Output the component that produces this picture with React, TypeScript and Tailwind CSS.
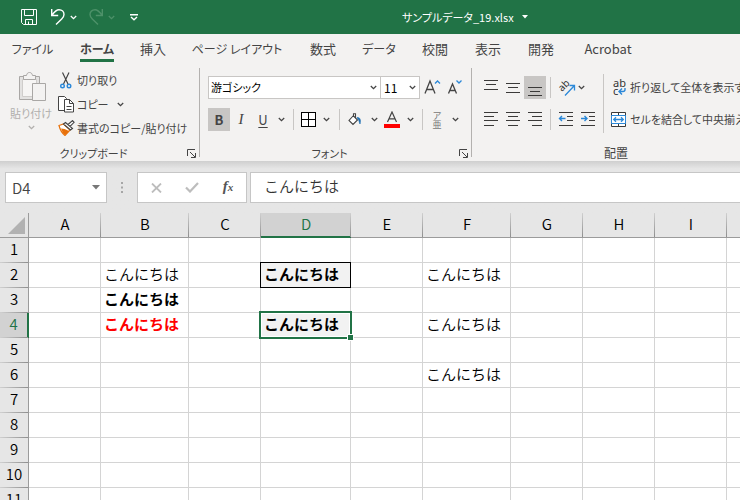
import { useState } from "react";
import type { ReactNode } from "react";
import clsx from "clsx";

const tabs = [
  { name: "ファイル", width: "w-[65px]", text: "text-xs" },
  { name: "ホーム", width: "w-[64px]", text: "text-xs" },
  { name: "挿入", width: "w-[48px]", text: "text-[13px]" },
  { name: "ページ レイアウト", width: "w-[120px]", text: "text-xs" },
  { name: "数式", width: "w-[52px]", text: "text-[13px]" },
  { name: "データ", width: "w-[60px]", text: "text-xs" },
  { name: "校閲", width: "w-[52px]", text: "text-[13px]" },
  { name: "表示", width: "w-[54px]", text: "text-[13px]" },
  { name: "開発", width: "w-[52px]", text: "text-[13px]" },
  { name: "Acrobat", width: "w-[82px]", text: "text-[13px]" },
];

const columns = [
  { name: "A", width: "w-[72px]" },
  { name: "B", width: "w-[88px]" },
  { name: "C", width: "w-[72px]" },
  { name: "D", width: "w-[90px]" },
  { name: "E", width: "w-[72px]" },
  { name: "F", width: "w-[88px]" },
  { name: "G", width: "w-[72px]" },
  { name: "H", width: "w-[72px]" },
  { name: "I", width: "w-[72px]" },
  { name: "", width: "w-auto" },
];

const rows = [1, 2, 3, 4, 5, 6, 7, 8, 9, 10, 11];

interface Cell {
  text: string;
  bold?: boolean;
  red?: boolean;
  fill?: boolean;
  outline?: boolean;
}

const cells: Record<string, Cell> = {
  B2: { text: "こんにちは" },
  B3: { text: "こんにちは", bold: true },
  B4: { text: "こんにちは", bold: true, red: true },
  D2: { text: "こんにちは", bold: true, fill: true, outline: true },
  D4: { text: "こんにちは", bold: true, fill: true },
  F2: { text: "こんにちは" },
  F4: { text: "こんにちは" },
  F6: { text: "こんにちは" },
};

function Chevron() {
  return (
    <svg width="7" height="5" viewBox="0 0 7 5" fill="none" stroke="currentColor" strokeWidth="1.3">
      <path d="M.8 1 3.5 3.6 6.2 1" />
    </svg>
  );
}

function Lines({ rows }: { rows: [number, number, number][] }) {
  return (
    <svg width="16" height="16" viewBox="0 0 16 16" stroke="#3b3a39" shapeRendering="crispEdges">
      {rows.map(([y, x1, x2]) => (
        <path key={y} d={`M${x1} ${y + 0.5}H${x2}`} />
      ))}
    </svg>
  );
}

function Separator({ className }: { className?: string }) {
  return <span className={clsx("h-[21px] w-px shrink-0 bg-[#c8c6c4]", className)} />;
}

interface ToolProps {
  label: string;
  width?: string;
  active?: boolean;
  className?: string;
  children: ReactNode;
}

function Tool({ label, width = "w-[22px]", active, className, children }: ToolProps) {
  return (
    <button
      type="button"
      aria-label={label}
      aria-pressed={active}
      className={clsx("flex h-[23px] shrink-0 items-center justify-center", width, active && "bg-[#c8c6c4]", className)}
    >
      {children}
    </button>
  );
}

interface GroupProps {
  label: string;
  className: string;
  labelSize?: string;
  launcher?: boolean;
  children: ReactNode;
}

function Group({ label, className, labelSize = "text-[11px]", launcher = true, children }: GroupProps) {
  return (
    <section aria-label={label} className={clsx("flex shrink-0 flex-col", className)}>
      <div className="flex flex-1">{children}</div>
      <div className="flex h-4 items-center">
        <h2 className={clsx("flex-1 text-center leading-4", labelSize)}>{label}</h2>
        <button type="button" aria-label={`${label}の設定`} className="flex w-3 items-center">
          {launcher && (
            <svg width="9" height="9" viewBox="0 0 9 9" fill="none" stroke="#444">
              <path d="M.5 7V.5H8M3 3l5 5M8.5 4v4.5H4" />
            </svg>
          )}
        </button>
      </div>
    </section>
  );
}

function TitleBar() {
  return (
    <header className="grid h-[34px] shrink-0 grid-cols-[402px_1fr] items-center bg-[#217346] text-white">
      <div className="flex items-center pl-[21px]">
        <button type="button" aria-label="上書き保存">
          <svg width="16" height="16" viewBox="0 0 16 16" fill="none" stroke="currentColor">
            <path d="M.5.5h15v15H2.500l-2-2zM3.500.5v6h9v-6M4.500 15.500v-5h7v5M7.500 12.500v3" />
          </svg>
        </button>
        <button type="button" aria-label="元に戻す" className="ml-[13px]">
          <svg width="16" height="18" viewBox="0 0 16 18" fill="none" stroke="currentColor" strokeWidth="1.4">
            <path d="M1.700 1v6.500h6.500M1.900 7.200C4 4.500 6 1.800 9 1.800c3 0 5 2 5 4.600 0 2-1 3.200-2.300 4.500L6 16.500" />
          </svg>
        </button>
        <button type="button" aria-label="元に戻す履歴" className="ml-1">
          <Chevron />
        </button>
        <button type="button" aria-label="やり直し" disabled className="ml-[11px] text-[#4d9169]">
          <svg width="16" height="18" viewBox="0 0 16 18" fill="none" stroke="currentColor" strokeWidth="1.4">
            <path d="M14.300 1v6.500H7.800M14.100 7.200C12 4.500 10 1.800 7 1.800c-3 0-5 2-5 4.600 0 2 1 3.200 2.300 4.500L10 16.500" />
          </svg>
        </button>
        <button type="button" aria-label="やり直し履歴" disabled className="ml-1 text-[#4d9169]">
          <Chevron />
        </button>
        <button type="button" aria-label="クイック アクセス ツール バーのカスタマイズ" className="ml-[15px]">
          <svg width="8" height="7" viewBox="0 0 8 7" fill="none" stroke="currentColor" strokeWidth="1.4">
            <path d="M0 .7h8M1 3l3 2.700L7 3" />
          </svg>
        </button>
      </div>
      <button type="button" className="flex items-center gap-2 justify-self-start">
        <h1 className="text-[11px] leading-4">サンプルデータ_19.xlsx</h1>
        <svg width="6" height="4" viewBox="0 0 6 4" fill="currentColor">
          <path d="M0 0h6L3 3.500z" />
        </svg>
      </button>
    </header>
  );
}

function ClipboardGroup() {
  return (
    <Group label="クリップボード" className="w-[199px]">
      <button type="button" disabled className="ml-2 flex w-[46px] flex-col items-center pt-[5px] text-[#b1afad]">
        <svg width="28" height="32" viewBox="0 0 28 32" fill="none" stroke="#a9a7a5" className="ml-1">
          <path fill="#e3e2e1" d="M.5 5.500h20v23H.5z" />
          <path fill="#f6f5f4" d="M3.500 8.500h14v17h-14z" stroke="#cfcdcb" />
          <path fill="#f3f2f1" d="M4.500 8.500v-4h3c.4-2 1.300-3 3-3s2.600 1 3 3h3v4z" />
          <path fill="#f3f2f1" d="M13.500 12.500h13v17h-13z" />
        </svg>
        <span className="mt-[2px] leading-4 whitespace-nowrap">貼り付け</span>
        <span className="mt-1">
          <Chevron />
        </span>
      </button>
      <div className="flex flex-col pt-[2px] pl-1">
        <button type="button" className="flex h-6 items-center gap-[2px]">
          <svg width="17" height="17" viewBox="0 0 17 17" fill="none">
            <path d="M4.500.5l5.500 11.500M11 .5 5.500 12" stroke="#444" strokeWidth="1.200" />
            <circle cx="4.500" cy="14" r="1.800" stroke="#2b88d8" strokeWidth="1.400" />
            <circle cx="11" cy="14" r="1.800" stroke="#2b88d8" strokeWidth="1.400" />
          </svg>
          切り取り
        </button>
        <div className="flex h-6 items-center">
          <button type="button" className="flex items-center gap-[2px]">
            <svg width="17" height="17" viewBox="0 0 17 17" fill="#fff" stroke="#444">
              <path d="M.5.500h6l2 2v12h-8z" />
              <path d="M6.500 3.500h5l4 4v8.500h-9z" />
              <path d="M11.500 3.500v4h4M8.500 10.500h5M8.500 13.500h5" fill="none" />
            </svg>
            コピー
          </button>
          <button type="button" aria-label="コピーのオプション" className="ml-2">
            <Chevron />
          </button>
        </div>
        <button type="button" className="flex h-6 items-center gap-[2px] whitespace-nowrap">
          <svg width="17" height="16" viewBox="0 0 17 16" fill="none">
            <path d="M1 5.500 5.500 4l6.500 6-5 5.500C4 13 2 9.500 1 5.500z" fill="#fff" stroke="#e8710a" strokeWidth="1.200" />
            <path d="M3 8.500 6.500 9 11 11l-4 4C5 13.500 4 11 3 8.500z" fill="#e8710a" />
            <path d="M5.500 4 7.500 2.500l7 6L12.500 10zM10 4.500 14.500.6l1.600 1.700-4.100 4" fill="#fff" stroke="#444" strokeWidth="1.100" />
          </svg>
          書式のコピー/貼り付け
        </button>
      </div>
    </Group>
  );
}

function FontGroup() {
  return (
    <Group label="フォント" className="w-[271px]">
      <div className="flex flex-col gap-[9px] pt-[10px] pl-2">
        <div className="flex">
          <div className="grid w-[173px] items-center border border-[#c8c6c4] bg-white">
            <select aria-label="フォント名" className="col-start-1 row-start-1 h-[21px] appearance-none pl-[2px] text-black outline-none">
              <option>游ゴシック</option>
            </select>
            <span className="pointer-events-none col-start-1 row-start-1 mr-[3px] justify-self-end">
              <Chevron />
            </span>
          </div>
          <div className="-ml-px grid w-[40px] items-center border border-[#c8c6c4] bg-white">
            <select aria-label="フォント サイズ" className="col-start-1 row-start-1 h-[21px] appearance-none pl-[3px] text-xs text-black outline-none">
              <option>11</option>
            </select>
            <span className="pointer-events-none col-start-1 row-start-1 mr-[3px] justify-self-end">
              <Chevron />
            </span>
          </div>
          <Tool label="フォント サイズの拡大" className="ml-[2px]">
            <svg width="18" height="18" viewBox="0 0 18 18" fill="none" stroke="#444" strokeWidth="1.300">
              <path d="M1 14.500 6 2l5 12.500M2.800 10.500h6.400" />
              <path d="m11 4.500 2.500-2.500L16 4.500" stroke="#2b88d8" />
            </svg>
          </Tool>
          <Tool label="フォント サイズの縮小">
            <svg width="18" height="18" viewBox="0 0 18 18" fill="none" stroke="#444" strokeWidth="1.300">
              <path d="M2.500 14.500 6.500 5l4 9.500M4 11.500h5" />
              <path d="m10.500 1.500 2.500 2.500 2.500-2.500" stroke="#2b88d8" />
            </svg>
          </Tool>
        </div>
        <div className="flex items-center">
          <Tool label="太字" active>
            <b className="text-[13px]">B</b>
          </Tool>
          <Tool label="斜体">
            <i className="font-['Liberation_Serif',serif] text-[15px]">I</i>
          </Tool>
          <Tool label="下線">
            <u className="text-[13px] underline-offset-2">U</u>
          </Tool>
          <Tool label="下線の種類" width="w-[14px]">
            <Chevron />
          </Tool>
          <Separator className="ml-[5px]" />
          <Tool label="罫線" width="w-7">
            <svg width="15" height="15" viewBox="0 0 15 15" fill="#fff" stroke="#000" shapeRendering="crispEdges">
              <path d="M.5.5h14v14H.5zM7.500.5v14M.5 7.500h14" />
            </svg>
          </Tool>
          <Tool label="罫線の種類" width="w-2">
            <Chevron />
          </Tool>
          <Separator className="ml-[9px]" />
          <Tool label="塗りつぶしの色" width="w-[30px]">
            <svg width="14" height="14" viewBox="0 0 14 14" fill="none" stroke="#444" strokeWidth="1.100">
              <path d="M5.500 2.500 1 7.500 5 11.500 9.500 7 5.500 3V.8h2V5" fill="#fff" />
              <path d="M9 4.500c3-.5 4.200 2.500 3 6.500-1-1.800-.8-4-2-4.800z" fill="#1f6fb2" stroke="#1f6fb2" strokeWidth=".6" />
            </svg>
          </Tool>
          <Tool label="塗りつぶしの色の選択" width="w-2">
            <Chevron />
          </Tool>
          <Tool label="フォントの色" width="w-[28px]">
            <svg width="16" height="17" viewBox="0 0 16 17" fill="none">
              <path d="m3.500 11 4.500-10 4.500 10M5 7.800h6" stroke="#444" strokeWidth="1.200" />
              <path d="M0 13h16v4H0z" fill="#f00" />
            </svg>
          </Tool>
          <Tool label="フォントの色の選択" width="w-2">
            <Chevron />
          </Tool>
          <Separator className="ml-2" />
          <Tool label="ふりがなの表示" width="w-7">
            <span className="w-[9px] text-[9px] leading-[9px] break-all text-[#777] [font-feature-settings:normal]">ア亜</span>
          </Tool>
          <Tool label="ふりがなの設定" width="w-2">
            <Chevron />
          </Tool>
        </div>
      </div>
    </Group>
  );
}

function AlignmentGroup() {
  return (
    <Group label="配置" className="w-[300px]" labelSize="text-xs" launcher={false}>
      <div className="flex flex-col gap-[9px] pt-[10px] pl-2">
        <div className="flex items-center">
          <Tool label="上揃え">
            <Lines rows={[[0, 1, 15], [4, 3, 13], [9, 1, 15]]} />
          </Tool>
          <Tool label="上下中央揃え">
            <Lines rows={[[3, 1, 15], [7, 3, 13], [12, 1, 15]]} />
          </Tool>
          <Tool label="下揃え" active>
            <Lines rows={[[7, 1, 15], [11, 3, 13], [15, 1, 15]]} />
          </Tool>
          <Separator className="ml-1" />
          <Tool label="方向" className="ml-1">
            <svg width="18" height="18" viewBox="0 0 18 18" fill="none" className="overflow-visible">
              <text transform="translate(5 13) rotate(-45)" fontSize="10" fill="#333" className="font-['Noto_Sans',sans-serif]">
                ab
              </text>
              <path d="M8 16.500 17 7M12.500 6.500h5v5" stroke="#2b88d8" strokeWidth="1.300" />
            </svg>
          </Tool>
          <Tool label="方向の選択" width="w-2">
            <Chevron />
          </Tool>
        </div>
        <div className="flex items-center">
          <Tool label="左揃え">
            <Lines rows={[[0, 1, 15], [4, 1, 11], [8, 1, 15], [13, 1, 11]]} />
          </Tool>
          <Tool label="中央揃え">
            <Lines rows={[[0, 1, 15], [4, 3, 13], [8, 1, 15], [13, 3, 13]]} />
          </Tool>
          <Tool label="右揃え">
            <Lines rows={[[0, 1, 15], [4, 5, 15], [8, 1, 15], [13, 5, 15]]} />
          </Tool>
          <Separator className="ml-1" />
          <Tool label="インデントを減らす" className="ml-1">
            <svg width="16" height="16" viewBox="0 0 16 16" fill="none" stroke="#3b3a39">
              <path d="M1 .5h14M9 4.500h6M9 8.500h6M1 13.500h14" />
              <path d="M7.500 6.500h-6M4 4 1.500 6.500 4 9" stroke="#2b88d8" strokeWidth="1.400" />
            </svg>
          </Tool>
          <Tool label="インデントを増やす">
            <svg width="16" height="16" viewBox="0 0 16 16" fill="none" stroke="#3b3a39">
              <path d="M1 .5h14M9 4.500h6M9 8.500h6M1 13.500h14" />
              <path d="M1 6.500h6M4.500 4 7 6.500 4.500 9" stroke="#2b88d8" strokeWidth="1.400" />
            </svg>
          </Tool>
        </div>
      </div>
      <span className="mt-2 ml-1 h-[59px] w-px bg-[#c8c6c4]" />
      <div className="flex flex-col gap-[9px] pt-[10px] pl-[7px]">
        <button type="button" className="flex h-[23px] items-center gap-1 whitespace-nowrap">
          <svg width="15" height="17" viewBox="0 0 15 17" fill="none" className="overflow-visible">
            <text fontSize="11" fill="#333" className="font-['Noto_Sans',sans-serif]">
              <tspan x="2" y="8">ab</tspan>
              <tspan x="2" y="16">c</tspan>
            </text>
            <path d="M14 9v1.500c0 1.500-1 2-2 2H8.500M11 9.500l-3 3 3 3" stroke="#2b88d8" strokeWidth="1.400" />
          </svg>
          折り返して全体を表示する
        </button>
        <button type="button" className="flex h-[23px] items-center gap-1 whitespace-nowrap">
          <svg width="15" height="15" viewBox="0 0 15 15" fill="none">
            <path d="M.5.5h14v14H.5zM7.500.5v3M7.500 11.500v3" fill="#fff" stroke="#3b3a39" />
            <path d="M.5 3.500h14v8H.5z" fill="#fff" stroke="#2b88d8" />
            <path d="M3 7.500h9M5 5.200 2.700 7.500 5 9.800M10 5.200l2.300 2.300L10 9.800" stroke="#2b88d8" strokeWidth="1.300" />
          </svg>
          セルを結合して中央揃え
        </button>
      </div>
    </Group>
  );
}

function FormulaBar() {
  return (
    <div className="flex shrink-0 bg-[#e6e6e6] bg-linear-to-b from-[#cfcfcf] to-[#e6e6e6] to-15% pt-[11px] pb-[10px] pl-[5px] [font-feature-settings:normal]">
      <div className="flex h-[31px] w-[102px] items-center border border-[#c6c6c6] bg-white">
        <input aria-label="名前ボックス" defaultValue="D4" className="w-full min-w-0 pt-[2px] pl-[6px] text-[15px] font-[350] text-[#444] outline-none" />
        <button type="button" aria-label="名前の一覧" className="mr-[6px]">
          <svg width="8" height="5" viewBox="0 0 8 5" fill="#777">
            <path d="M0 0h8L4 4.500z" />
          </svg>
        </button>
      </div>
      <div className="flex w-[30px] items-center justify-center">
        <svg width="2" height="11" viewBox="0 0 2 11" fill="#a6a6a6">
          <path d="M0 0h2v2H0zM0 4.500h2v2H0zM0 9h2v2H0z" />
        </svg>
      </div>
      <div className="grid h-[31px] w-[110px] grid-cols-3 border border-[#c6c6c6] bg-white">
        <button type="button" aria-label="キャンセル" className="flex items-center justify-center">
          <svg width="11" height="10" viewBox="0 0 11 10" stroke="#bdbdbd" strokeWidth="1.800">
            <path d="m1 .5 9 9M10 .5l-9 9" />
          </svg>
        </button>
        <button type="button" aria-label="入力" className="flex items-center justify-center">
          <svg width="14" height="11" viewBox="0 0 14 11" fill="none" stroke="#bdbdbd" strokeWidth="2.200">
            <path d="m1 5.500 4 4L13 1" />
          </svg>
        </button>
        <button type="button" aria-label="関数の挿入" className="pb-[2px] font-['Liberation_Serif',serif] text-[15px] leading-4 font-bold text-[#555] italic">
          f<span className="text-[11px]">x</span>
        </button>
      </div>
      <input
        aria-label="数式バー"
        defaultValue="こんにちは"
        className="ml-[3px] h-[31px] min-w-0 flex-1 border border-r-0 border-[#c6c6c6] bg-white pb-1 pl-[13px] text-[15px] font-[350] text-[#333] outline-none"
      />
    </div>
  );
}

function Sheet() {
  const [selected, setSelected] = useState("D4");

  return (
    <div className="min-h-0 flex-1 overflow-hidden bg-white">
      <table className="w-full table-fixed border-separate border-spacing-0 text-[15px] leading-[22px] font-[350] text-black [font-feature-settings:normal]">
        <colgroup>
          <col className="w-[29px]" />
          {columns.map((column) => (
            <col key={column.name} className={column.width} />
          ))}
        </colgroup>
        <thead>
          <tr className="h-[25px] bg-[#e6e6e6]">
            <th className="relative border-r border-b border-[#9b9b9b] p-0" aria-label="すべて選択">
              <svg width="17" height="17" viewBox="0 0 17 17" fill="#b2b2b2" className="absolute right-[3px] bottom-[3px]">
                <path d="M17 0v17H0z" />
              </svg>
            </th>
            {columns.map((column) => {
              const active = column.name === selected[0];
              return (
                <th
                  key={column.name}
                  scope="col"
                  className={clsx(
                    "relative p-0 text-center align-top font-[350]",
                    active ? "border-b-2 border-[#217346] bg-[#d2d2d2] text-[#217346]" : "border-b border-[#9b9b9b]"
                  )}
                >
                  {column.name}
                  {column.name && <span className="absolute top-0 right-0 h-6 w-px bg-linear-to-b from-[#d0d0d0] to-[#8f8f8f]" />}
                </th>
              );
            })}
          </tr>
        </thead>
        <tbody>
          {rows.map((row) => (
            <tr key={row} className="h-[25px]">
              <th
                scope="row"
                className={clsx(
                  "relative p-0 text-center align-top font-[350]",
                  String(row) === selected.slice(1) ? "border-r-2 border-[#217346] bg-[#d2d2d2] text-[#217346]" : "border-r border-[#9b9b9b] bg-[#e6e6e6]"
                )}
              >
                {row}
                <span className="absolute bottom-0 left-0 h-px w-7 bg-linear-to-r from-[#d0d0d0] to-[#8f8f8f]" />
              </th>
              {columns.map((column) => {
                const id = column.name + row;
                const cell = cells[id];
                return (
                  <td
                    key={id}
                    onClick={() => column.name && setSelected(id)}
                    className={clsx(
                      "relative border-b border-[#d4d4d4] p-0 pl-[3px] align-top whitespace-nowrap",
                      column.name && "border-r",
                      cell?.bold && "font-bold",
                      cell?.red && "text-[#ff0000]",
                      cell?.fill && "bg-[#f2f2f2]"
                    )}
                  >
                    {cell?.text}
                    {cell?.outline && <span className="pointer-events-none absolute -inset-px border border-black" />}
                    {id === selected && (
                      <span className="pointer-events-none absolute -inset-[2px] z-10 border-2 border-[#217346]">
                        <span className="absolute inset-0 border border-white" />
                        <span className="absolute -right-[4px] -bottom-[4px] size-[7px] border border-white bg-[#217346]" />
                      </span>
                    )}
                  </td>
                );
              })}
            </tr>
          ))}
        </tbody>
      </table>
    </div>
  );
}

export default function App() {
  const [tab, setTab] = useState("ホーム");

  return (
    <div className="flex h-screen flex-col overflow-hidden bg-[#f3f2f1] font-['Noto_Sans_CJK_JP',sans-serif] text-[11px] text-[#444] [font-feature-settings:'palt']">
      <TitleBar />

      {/* Ribbon tabs */}
      <nav className="flex h-8 shrink-0 overflow-hidden">
        {tabs.map((item) => (
          <button
            key={item.name}
            type="button"
            onClick={() => setTab(item.name)}
            className={clsx("flex shrink-0 items-start justify-center pt-[5px] whitespace-nowrap", item.width, item.text)}
          >
            <span className={clsx("border-b-3 leading-5", item.name === tab ? "border-[#217346] font-bold" : "border-transparent")}>{item.name}</span>
          </button>
        ))}
      </nav>

      {/* Ribbon */}
      <div className="flex h-[95px] shrink-0 overflow-hidden">
        <ClipboardGroup />
        <span className="mt-[2px] mb-1 w-px shrink-0 bg-[#b3b1af]" />
        <FontGroup />
        <span className="mt-[2px] mb-1 w-px shrink-0 bg-[#b3b1af]" />
        <AlignmentGroup />
      </div>

      <FormulaBar />
      <Sheet />
    </div>
  );
}
